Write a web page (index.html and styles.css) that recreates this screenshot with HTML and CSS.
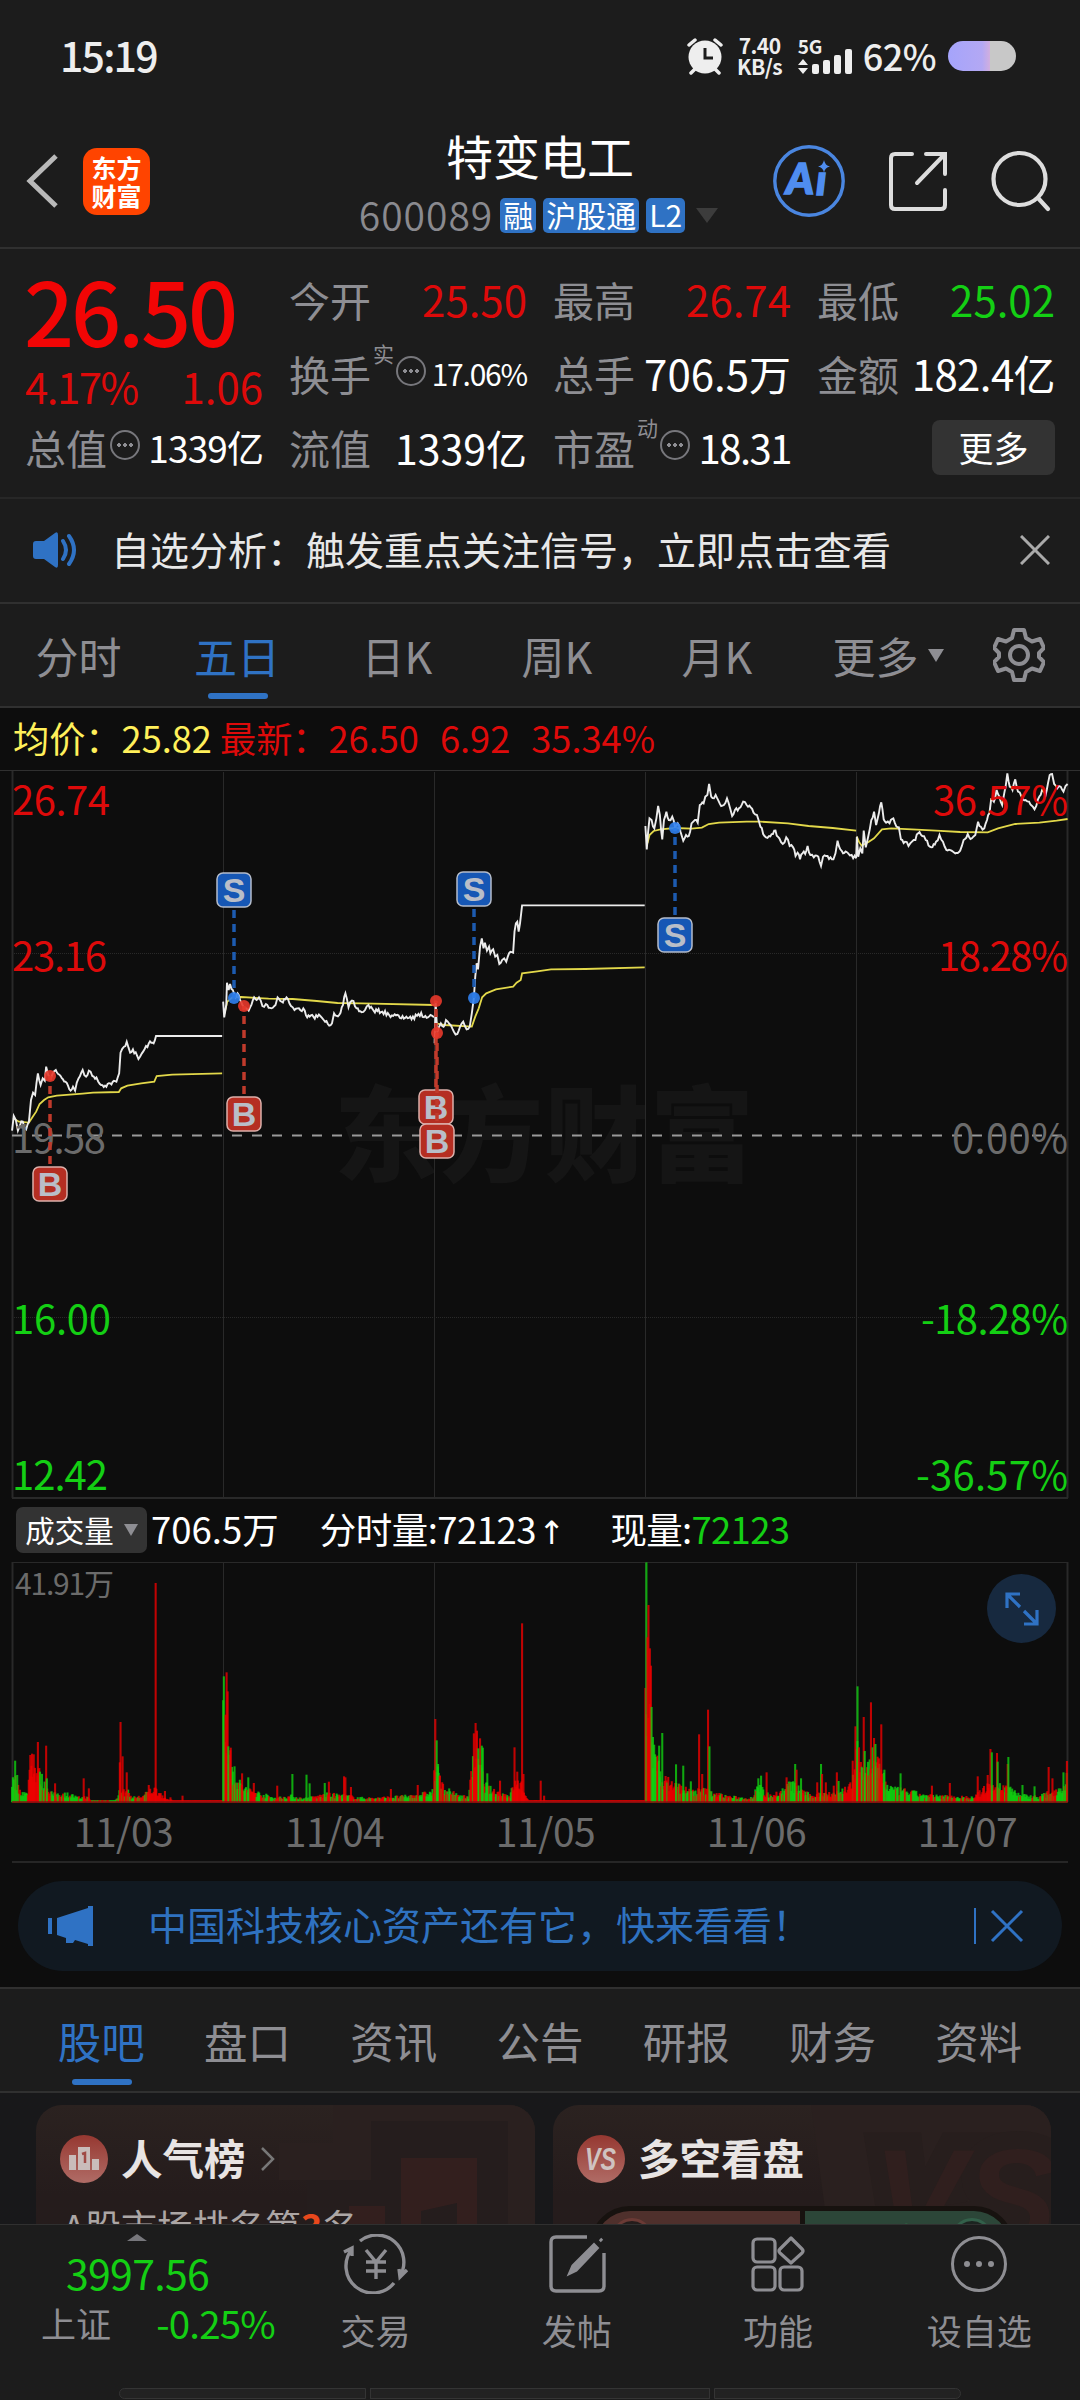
FILE: index.html
```html
<!DOCTYPE html>
<html lang="zh-CN">
<head>
    <meta charset="UTF-8">
    <meta name="viewport" content="width=device-width, initial-scale=1.0">
    <title>特变电工 600089</title>
    <link rel="stylesheet" href="styles.css">
</head>
<body>
    <div class="status">
        <span class="time">15:19</span>
        <div class="status-right">
            <svg class="alarm" width="38" height="38" viewBox="0 0 38 38">
                <circle cx="19" cy="20" r="16.500" fill="#eee"/>
                <path d="M3 8l6-5M35 8l-6-5M5 36l5-5M33 36l-5-5" stroke="#eee" stroke-width="3.500" stroke-linecap="round"/>
                <path d="M19 11v10h8" fill="none" stroke="#1c1c1c" stroke-width="3"/>
            </svg>
            <div class="speed"><span>7.40</span><span>KB/s</span></div>
            <div class="signal">
                <span>5G</span>
                <svg width="56" height="26" viewBox="0 0 56 26" fill="#eee">
                    <path d="M0 17l5-6 5 6zM0 20l5 6 5-6z"/>
                    <rect x="14" y="16" width="7" height="10" rx="2"/>
                    <rect x="25" y="12" width="7" height="14" rx="2"/>
                    <rect x="36" y="7" width="7" height="19" rx="2"/>
                    <rect x="47" y="1" width="7" height="25" rx="2"/>
                </svg>
            </div>
            <span class="percent">62%</span>
            <div class="battery"></div>
        </div>
    </div>

    <div class="header">
        <div class="header-left">
            <svg width="34" height="56" viewBox="0 0 34 56"><path d="M30 3L4 28l26 25" fill="none" stroke="#b9b9b9" stroke-width="5"/></svg>
            <div class="logo"><span>东方</span><span>财富</span></div>
        </div>
        <div class="header-title">
            <h1>特变电工</h1>
            <div class="sub">
                <span class="code">600089</span>
                <span class="tag">融</span>
                <span class="tag">沪股通</span>
                <span class="tag">L2</span>
                <i class="arrow"></i>
            </div>
        </div>
        <div class="header-right">
            <svg width="72" height="74" viewBox="0 0 72 74">
                <circle cx="36" cy="37" r="34.200" fill="none" stroke="#4a86e0" stroke-width="3.400"/>
                <text class="ai" x="13" y="50" textLength="28" lengthAdjust="spacingAndGlyphs">A</text>
                <text class="ai" x="43" y="51">ı</text>
                <path d="M51 16q1 5.500 6 6.500q-5 1-6 6q-1-5-6-6q5-1 6-6.500z" fill="#4f8df0"/>
            </svg>
            <svg class="share" width="58" height="60" viewBox="0 0 58 60" fill="none" stroke="#ddd" stroke-width="4" stroke-linecap="round">
                <path d="M23 3H6Q2 3 2 7v47q0 4 4 4h46q4 0 4-4V39M37 3h19v20M55 4L28 32"/>
            </svg>
            <svg width="60" height="62" viewBox="0 0 60 62" fill="none" stroke="#ddd" stroke-width="4.200" stroke-linecap="round">
                <circle cx="28.500" cy="29" r="26"/><path d="M47 48l10 11"/>
            </svg>
        </div>
    </div>

    <div class="quote">
        <div class="price-box">
            <div class="price">26.50</div>
            <div class="change"><span>4.17%</span><span class="diff">1.06</span></div>
        </div>
        <div class="item"><label>今开</label><b class="red">25.50</b></div>
        <div class="item"><label>最高</label><b class="red">26.74</b></div>
        <div class="item"><label>最低</label><b class="green">25.02</b></div>
        <div class="item"><label>换手<sup>实</sup></label><i class="info"></i><b class="small">17.06%</b></div>
        <div class="item"><label>总手</label><b>706.5万</b></div>
        <div class="item"><label>金额</label><b class="amount">182.4亿</b></div>
        <div class="item"><label>总值</label><i class="info tight"></i><b class="mid">1339亿</b></div>
        <div class="item"><label>流值</label><b class="cap">1339亿</b></div>
        <div class="item"><label>市盈<sup>动</sup></label><i class="info"></i><b class="pe">18.31</b></div>
        <div class="item last"><button class="more">更多</button></div>
    </div>

    <div class="notice">
        <svg width="46" height="38" viewBox="0 0 46 38">
            <path d="M3 10h8L22 2q3-2 3 2v30q0 4-3 2L11 28H3q-3 0-3-3V13q0-3 3-3z" fill="#2f72c4"/>
            <path d="M30 10q6 9 0 18M36 5q10 14 0 28" fill="none" stroke="#2f72c4" stroke-width="4" stroke-linecap="round"/>
        </svg>
        <p>自选分析：触发重点关注信号，立即点击查看</p>
        <svg width="30" height="30" viewBox="0 0 30 30"><path d="M1 1l28 28M29 1L1 29" stroke="#aaa" stroke-width="3"/></svg>
    </div>

    <div class="periods">
        <span>分时</span>
        <span class="on">五日</span>
        <span>日K</span>
        <span>周K</span>
        <span>月K</span>
        <span>更多<i class="arrow"></i></span>
        <svg width="52" height="54" viewBox="0 0 52 54" fill="none" stroke="#8e8e93" stroke-width="4" stroke-linejoin="round">
            <path d="M21 2h10l2 8 6 3.500 8-2.500 4 9-5 5v4l5 5-4 9-8-2.500-6 3.500-2 8H21l-2-8-6-3.500-8 2.500-4-9 5-5v-4l-5-5 4-9 8 2.500 6-3.500z"/>
            <circle cx="26" cy="27" r="9"/>
        </svg>
    </div>

    <div class="chart-info">
        <span class="yellow">均价：25.82</span>
        <span class="red">最新：</span>
        <span class="red">26.50</span>
        <span class="red">6.92</span>
        <span class="red">35.34%</span>
    </div>

    <svg class="chart" width="1080" height="730" viewBox="0 769 1080 730">
        <text class="watermark" x="334" y="1174" textLength="420">东方财富</text>
        <g class="grid">
            <path d="M0 770.500H1080" stroke="#303030"/>
            <path d="M12.500 771V1498M1067.500 771V1498" stroke-width="2"/>
            <path d="M223.500 772V1498M434.500 772V1498M645.500 772V1498M856.500 772V1498"/>
            <path d="M12 953.500H1068M12 1317.500H1068" stroke-dasharray="1 1"/>
            <path d="M12 1498H1068" stroke-width="2"/>
        </g>
        <path d="M12 1135.500H1068" stroke="#999" stroke-width="2" stroke-dasharray="10 10"/>
        <!-- the series use three units to one pixel -->
        <svg x="0" y="760" width="1080" height="450" viewBox="0 0 3136 1350" preserveAspectRatio="none">
            <g id="lines"></g>
        </svg>
        <g class="axis">
            <g class="red">
                <text x="12" y="815" textLength="98">26.74</text>
                <text x="12" y="971" textLength="95">23.16</text>
                <text x="1068" y="815" textLength="135" text-anchor="end">36.57%</text>
                <text x="1068" y="971" textLength="130" text-anchor="end">18.28%</text>
            </g>
            <g class="flat">
                <text x="12" y="1153" textLength="94">19.58</text>
                <text x="1068" y="1153" textLength="116" text-anchor="end">0.00%</text>
            </g>
            <g class="green">
                <text x="12" y="1334" textLength="99">16.00</text>
                <text x="12" y="1490" textLength="96">12.42</text>
                <text x="1068" y="1334" textLength="147" text-anchor="end">-18.28%</text>
                <text x="1068" y="1490" textLength="152" text-anchor="end">-36.57%</text>
            </g>
        </g>
        <g id="marks"></g>
    </svg>

    <div class="volume-info">
        <button>成交量<i class="arrow"></i></button>
        <span class="v1">706.5万</span>
        <span class="v2">分时量:72123<em>↑</em></span>
        <span class="v3">现量:<b class="green">72123</b></span>
    </div>

    <div class="volume">
        <svg width="1080" height="242" viewBox="0 1561 1080 242">
            <g class="grid">
                <path d="M12 1562.500H1068M223.500 1562V1802M434.500 1562V1802M645.500 1562V1802M856.500 1562V1802"/>
                <path d="M12.500 1562V1802M1067.500 1562V1802" stroke-width="2"/>
            </g>
            <text class="vmax" x="15" y="1595" textLength="99">41.91万</text>
            <svg x="0" y="1550" width="1080" height="320" viewBox="0 0 3136 960" preserveAspectRatio="none">
                <g id="bars"></g>
                <path d="M35 756H3100" stroke="#8a1010" stroke-width="4"/>
            </svg>
        </svg>
        <div class="expand">
            <svg width="34" height="34" viewBox="0 0 34 34" fill="none" stroke="#2f72c4" stroke-width="3.200">
                <path d="M15 2H2v14M2 2l13 13M19 32h13V18M32 32L19 19"/>
            </svg>
        </div>
    </div>
    <div class="dates">
        <span>11/03</span><span>11/04</span><span>11/05</span><span>11/06</span><span>11/07</span>
    </div>

    <div class="banner-wrap">
        <div class="banner">
            <svg width="46" height="40" viewBox="0 0 46 40" fill="#2f72c4">
                <path d="M0 12h4v16H0zM9 12L40 2V0h5v40h-5v-2l-13-4-2 3h-7v-5l-9-3z"/>
            </svg>
            <p>中国科技核心资产还有它，快来看看！</p>
            <i class="split"></i>
            <svg width="34" height="34" viewBox="0 0 34 34"><path d="M2 2l30 30M32 2L2 32" stroke="#2f72c4" stroke-width="3"/></svg>
        </div>
    </div>

    <div class="tabs">
        <span class="on">股吧</span>
        <span>盘口</span>
        <span>资讯</span>
        <span>公告</span>
        <span>研报</span>
        <span>财务</span>
        <span>资料</span>
    </div>

    <div class="cards">
        <div class="card">
            <svg class="deco" width="260" height="119" viewBox="0 0 260 119">
                <path d="M4 38h54V0h202v119H32V75H4z" fill="#2a201f"/>
                <path d="M32 75h64V16h137v103H32z" fill="#251d1d"/>
                <path d="M126 53h76v66h-20V98l-36 8v13h-20zM74 101h36v18H74z" fill="#331f1e"/>
            </svg>
            <div class="card-head">
                <svg width="48" height="48" viewBox="0 0 48 48">
                    <circle cx="24" cy="24" r="24" fill="url(#badge)"/>
                    <path d="M9 20h7v15H9zM18 12h12v23H18zM32 24h7v11h-7z" fill="#c9bcba"/>
                    <path d="M22 19l3-1v10" fill="none" stroke="#a04a45" stroke-width="2.500"/>
                    <defs>
                        <linearGradient id="badge" x1="0" y1="0" x2="0" y2="1">
                            <stop offset="0" stop-color="#963831"/><stop offset="1" stop-color="#b06c66"/>
                        </linearGradient>
                    </defs>
                </svg>
                <h2>人气榜</h2>
                <svg width="15" height="24" viewBox="0 0 15 24"><path d="M2 1l11 11L2 23" fill="none" stroke="#777" stroke-width="2.500"/></svg>
            </div>
            <p>A股市场排名第<b>3</b>名</p>
        </div>
        <div class="card">
            <svg class="deco" width="260" height="119" viewBox="0 0 260 119">
                <path d="M20 0h240v119H36z" fill="#2a201f"/>
                <text x="82" y="140" class="deco-vs">VS</text>
            </svg>
            <div class="card-head">
                <svg width="48" height="48" viewBox="0 0 48 48">
                    <circle cx="24" cy="24" r="24" fill="url(#badge)"/>
                    <text x="8" y="35" class="vs" textLength="31" lengthAdjust="spacingAndGlyphs">VS</text>
                </svg>
                <h2>多空看盘</h2>
            </div>
            <div class="versus">
                <div class="up"><i></i><span>看涨</span></div>
                <div class="down"><span>看跌</span><i></i></div>
            </div>
        </div>
    </div>

    <div class="footer">
        <div class="index">
            <i class="arrow-up"></i>
            <div class="green points">3997.56</div>
            <div class="row"><span>上证</span><span class="green">-0.25%</span></div>
        </div>
        <div class="nav">
            <svg width="66" height="60" viewBox="0 0 66 60" fill="none" stroke="#8e8e93" stroke-width="3.400">
                <path d="M17 7A27 27 0 0 1 57 42M64 36l-7 7-1-8M51 49A27 27 0 0 1 9 15M1 18l8-4v8"/>
                <path d="M23 16l10 12 10-12M33 28v17M23 28h20M23 37h20"/>
            </svg>
            <span>交易</span>
        </div>
        <div class="nav">
            <svg width="58" height="60" viewBox="0 0 58 60" fill="none" stroke="#8e8e93" stroke-width="3.400">
                <path d="M39 3H8Q3 3 3 8v44q0 5 5 5h43q5 0 5-5V19"/>
                <path d="M46 11L25 32l-3 7 6-3 21-22zM52 5l2 2" fill="#8e8e93"/>
            </svg>
            <span>发帖</span>
        </div>
        <div class="nav">
            <svg width="56" height="60" viewBox="0 0 56 60" fill="none" stroke="#8e8e93" stroke-width="3.200">
                <rect x="3" y="5" width="22" height="23" rx="4"/>
                <path d="M41 4l11 11q2 2 0 4L41 29 30 19q-2-2 0-4z" stroke-linejoin="round"/>
                <rect x="3" y="33" width="22" height="23" rx="4"/>
                <rect x="30" y="33" width="22" height="23" rx="4"/>
            </svg>
            <span>功能</span>
        </div>
        <div class="nav">
            <svg width="58" height="60" viewBox="0 0 58 60" fill="none" stroke="#8e8e93" stroke-width="3">
                <circle cx="29" cy="30" r="26.500"/>
                <g fill="#8e8e93" stroke="none"><circle cx="17" cy="30" r="3"/><circle cx="29" cy="30" r="3"/><circle cx="41" cy="30" r="3"/></g>
            </svg>
            <span>设自选</span>
        </div>
    </div>
    <div class="gesture"><i></i><i></i><i></i></div>

    <script src="chart.js"></script>
</body>
</html>
```

FILE: styles.css
```css
* {
    margin: 0;
    padding: 0;
    box-sizing: border-box;
}

body {
    width: 1080px;
    height: 2400px;
    overflow: hidden;
    background-color: #0d0d0d;
    color: #fff;
    font-family: "Noto Sans CJK SC", "Noto Sans", sans-serif;
    line-height: 1;
    display: flex;
    flex-direction: column;
}

body > * {
    flex-shrink: 0;
}

svg {
    display: block;
}

i, em {
    font-style: normal;
}

b {
    font-weight: 400;
}

button {
    border: none;
    color: #fff;
    font-family: inherit;
    line-height: 1;
}

.red { color: #dd0a0a; fill: #dd0a0a; }
.green { color: #14cf14; fill: #14cf14; }
.yellow { color: #fff05a; }
.flat { fill: #6b6b6b; }

.arrow {
    display: inline-block;
    border: 8px solid transparent;
    border-top: 13px solid #8e8e93;
    border-bottom: none;
}

/* status bar */
.status {
    height: 112px;
    padding: 0 64px 0 60px;
    background-color: #1c1c1c;
    color: #eee;
    display: flex;
    justify-content: space-between;
    align-items: center;
}

.time {
    margin-top: -3px;
    font-size: 41px;
    font-weight: 500;
    letter-spacing: -1.8px;
}

.status-right {
    display: flex;
    align-items: center;
}

.speed {
    width: 46px;
    margin: 0 15px 0 13px;
    font-size: 21px;
    font-weight: 700;
    display: flex;
    flex-direction: column;
    align-items: center;
    letter-spacing: -.5px;
}

.signal {
    font-size: 19px;
    font-weight: 700;
}

.signal svg {
    margin-top: -9px;
}

.signal span {
    position: relative;
    top: -2px;
}

.percent {
    margin: -2px 12px 0 9px;
    font-size: 36px;
    font-weight: 500;
    letter-spacing: -.5px;
}

.battery {
    width: 68px;
    height: 30px;
    border-radius: 15px;
    background: linear-gradient(90deg, #a5a4fb, #b3a8f4 50%, #cfaee0 61%, #c8c8c8 62%);
}

/* header */
.header {
    height: 137px;
    background-color: #1c1c1c;
    border-bottom: 2px solid #303030;
    display: grid;
    grid-template-columns: 330px 1fr 330px;
}

.header-left {
    padding: 3px 0 0 26px;
    display: flex;
    align-items: center;
    gap: 23px;
}

.logo {
    width: 67px;
    height: 67px;
    border-radius: 14px;
    background-color: #ff4400;
    font-size: 25px;
    font-weight: 700;
    line-height: 28px;
    display: flex;
    flex-direction: column;
    justify-content: center;
    align-items: center;
}

.header-title {
    padding-top: 19px;
    display: flex;
    flex-direction: column;
    align-items: center;
    gap: 20px;
}

h1 {
    font-size: 47px;
    font-weight: 400;
}

.sub {
    height: 35px;
    margin-left: -3px;
    display: flex;
    align-items: center;
    gap: 7px;
}

.code {
    margin-top: -3px;
    color: #8a8a8f;
    font-size: 39px;
    font-weight: 350;
    letter-spacing: 1px;
}

.tag {
    height: 35px;
    padding: 0 3px;
    border-radius: 5px;
    background-color: #2f72c4;
    font-size: 30px;
    line-height: 33px;
}

.sub .arrow {
    margin-left: 4px;
    border-width: 15px 11px 0;
    border-top-color: #3c3c3c;
}

.header-right {
    padding: 2px 29px 0 0;
    display: flex;
    justify-content: flex-end;
    align-items: center;
    gap: 44px;
}

.ai {
    font-family: "Lato", sans-serif;
    font-size: 42px;
    font-weight: 900;
    font-style: italic;
    fill: #4f8df0;
    stroke: #4f8df0;
    stroke-width: 1.5;
}

/* quote */
.quote {
    height: 250px;
    padding: 13px 25px 0 25px;
    background-color: #1c1c1c;
    border-bottom: 2px solid #272727;
    display: grid;
    grid-template-columns: repeat(4, 238px);
    grid-template-rows: repeat(3, 74px);
    justify-content: space-between;
}

.price-box {
    grid-row: span 2;
    display: flex;
    flex-direction: column;
}

.price {
    margin: 3px 0 12px -1px;
    color: #f20505;
    font-size: 88px;
    font-weight: 500;
    letter-spacing: -3.2px;
}

.change {
    color: #dd0a0a;
    font-size: 42px;
    display: flex;
    justify-content: space-between;
    letter-spacing: -1.5px;
}

.diff {
    letter-spacing: 0;
}

.item {
    display: flex;
    align-items: center;
    white-space: nowrap;
}

.item label {
    color: #8e8e93;
    font-size: 41px;
    position: relative;
}

.item sup {
    position: absolute;
    left: 84px;
    top: -10px;
    font-size: 21px;
}

.item b {
    margin-left: auto;
    font-size: 42px;
}

.item .amount { letter-spacing: -.6px; }
.item .cap { font-size: 41px; }
.item .pe { font-size: 40px; letter-spacing: -1.5px; }
.item .mid { font-size: 37px; letter-spacing: -.9px; }
.item .small { font-size: 30px; letter-spacing: -1.2px; }

.info {
    width: 30px;
    height: 30px;
    margin: -4px 0 0 25px;
    border: 2px solid #77777c;
    border-radius: 50%;
    background: radial-gradient(circle, #8e8e93 1.6px, transparent 2px) center / 6px 26px;
    background-clip: content-box;
    padding: 0 4px;
}

.tight {
    margin-left: 3px;
}

.last {
    justify-content: flex-end;
}

.more {
    width: 123px;
    height: 55px;
    padding-bottom: 2px;
    border-radius: 8px;
    background-color: #333;
    font-size: 35px;
}

/* notice */
.notice {
    height: 105px;
    padding: 0 30px 1px 33px;
    background-color: #1c1c1c;
    border-bottom: 2px solid #303030;
    display: flex;
    align-items: center;
}

.notice p {
    margin: -3px auto 0 32px;
    color: #e8e8e8;
    font-size: 39px;
}

/* period tabs */
.periods {
    height: 104px;
    background-color: #1c1c1c;
    border-bottom: 2px solid #303030;
    color: #8e8e93;
    font-size: 43px;
    line-height: 102px;
    text-align: center;
    display: grid;
    grid-template-columns: 157px repeat(4, 160px) 182px 80px;
    align-items: center;
    justify-items: center;
}

.periods span {
    height: 102px;
}

.on {
    color: #2f72c4;
    position: relative;
}

.on::after {
    content: "";
    width: 60px;
    height: 6px;
    border-radius: 3px;
    background-color: #2f72c4;
    position: absolute;
    left: calc(50% - 29px);
    bottom: 7px;
}

.periods .arrow {
    margin: 0 0 14px 9px;
    vertical-align: middle;
}

.chart-info {
    height: 61px;
    padding: 0 0 2px 13px;
    font-size: 36.2px;
    display: flex;
    align-items: center;
}

.chart-info .yellow { margin-right: 8px; }
.chart-info .red { margin-right: 21px; }
.chart-info .yellow + .red { margin-right: 0; }

/* charts */
.grid {
    fill: none;
    stroke: #292929;
    stroke-width: 1;
}

.watermark {
    font-size: 104px;
    font-weight: 900;
    fill: #151515;
}

.axis text {
    font-size: 40px;
}

.price-line {
    fill: none;
    stroke: #ececec;
    stroke-width: 1.9;
    vector-effect: non-scaling-stroke;
}

.avg-line {
    fill: none;
    stroke: #e2d84a;
    stroke-width: 1.8;
    vector-effect: non-scaling-stroke;
}

.mark text {
    font-family: "Liberation Sans", sans-serif;
    font-size: 34px;
    font-weight: 700;
    text-anchor: middle;
    fill: #b9bec8;
}

.vmax {
    font-size: 30px;
    fill: #6b6b6b;
}

.volume-info {
    height: 62px;
    padding: 0 0 0 16px;
    font-size: 36.5px;
    display: flex;
    align-items: center;
}

.volume-info span {
    margin-top: -1px;
}

.volume-info button {
    width: 131px;
    height: 46px;
    padding-bottom: 1px;
    border-radius: 7px;
    background-color: #333;
    font-size: 29.5px;
    display: flex;
    align-items: center;
    justify-content: center;
    gap: 10px;
}

.volume-info .arrow {
    border-width: 12px 7px 0;
}

.volume-info .v1 { margin-left: 4px; }
.volume-info .v2 { margin-left: 41px; letter-spacing: -.5px; }
.v2 em { margin-left: 2px; font-family: "DejaVu Sans", sans-serif; font-size: 32px; }
.volume-info .v3 { margin-left: 46px; letter-spacing: -.7px; }

.volume {
    position: relative;
}

.expand {
    width: 69px;
    height: 69px;
    border-radius: 50%;
    background-color: #17293f;
    display: flex;
    align-items: center;
    justify-content: center;
    position: absolute;
    right: 24px;
    top: 13px;
}

.dates {
    height: 60px;
    margin: 0 12px;
    padding: 8px 0 0 6px;
    border-bottom: 2px solid #262626;
    color: #6b6b6b;
    font-size: 39px;
    letter-spacing: -.5px;
    display: grid;
    grid-template-columns: repeat(5, 211px);
    text-align: center;
}

/* banner */
.banner-wrap {
    height: 126px;
    padding: 18px 18px 0;
    border-bottom: 2px solid #303030;
}

.banner {
    height: 90px;
    padding: 0 38px 0 30px;
    border-radius: 45px;
    background-color: #111921;
    color: #2f72c0;
    display: flex;
    align-items: center;
}

.banner p {
    margin: -5px auto 0 54px;
    font-size: 39px;
}

.split {
    width: 2px;
    height: 36px;
    margin-right: 14px;
    background-color: #2f72c4;
}

/* content tabs */
.tabs {
    height: 104px;
    padding: 0 28px 0 28px;
    background-color: #1c1c1c;
    border-bottom: 2px solid #303030;
    color: #8e8e93;
    font-size: 43.5px;
    line-height: 103px;
    display: grid;
    grid-template-columns: repeat(7, 1fr);
    text-align: center;
}

/* cards */
.cards {
    height: 131px;
    padding: 12px 29px 0 36px;
    overflow: hidden;
    background-color: #18181a;
    display: grid;
    grid-template-columns: 499px 498px;
    justify-content: space-between;
}

.card {
    height: 220px;
    padding: 30px 24px;
    border-radius: 26px;
    overflow: hidden;
    background: linear-gradient(#2b2220, #251c1c 90px);
    position: relative;
}

.deco {
    position: absolute;
    right: 0;
    top: 0;
}

.deco-vs {
    font-family: "Liberation Sans", sans-serif;
    font-size: 138px;
    font-weight: 700;
    font-style: italic;
    fill: #301f1e;
    stroke: #271e1d;
    stroke-width: 36px;
    paint-order: stroke;
}

.card-head {
    display: flex;
    align-items: center;
    position: relative;
}

h2 {
    margin: -3px 14px 0 13px;
    color: #e8e4e3;
    font-size: 41.5px;
    font-weight: 700;
}

.card p {
    margin: 24px 0 0 3px;
    color: #aca6a5;
    font-size: 36px;
    position: relative;
}

.card p b {
    color: #e8481c;
    font-weight: 700;
}

.vs {
    font-family: "Liberation Sans", sans-serif;
    font-size: 31px;
    font-weight: 700;
    font-style: italic;
    fill: #cfc3c1;
}

.versus {
    width: 424px;
    height: 80px;
    margin: 23px 0 0 13px;
    border: 5px solid #17120f;
    border-radius: 40px;
    overflow: hidden;
    background-color: #17120f;
    font-size: 32px;
    display: flex;
    gap: 5px;
    position: relative;
}

.versus div {
    flex: 1;
    display: flex;
    justify-content: space-between;
    padding: 7px 16px;
}

.up { background-color: #4f302c; color: #b84a22; }
.down { background-color: #2c4638; color: #2f8a50; }

.versus span {
    margin-top: 3px;
}

.up span { margin-right: 32px; }
.down span { margin-left: 32px; }

.versus i {
    width: 42px;
    height: 42px;
    border-radius: 50%;
    background-color: #241c1b;
    border: 3px solid #6b3a35;
}

.versus .down i {
    background-color: #1c2420;
    border-color: #33604a;
}

/* footer */
.footer {
    height: 162px;
    background-color: #1c1c1c;
    border-top: 1px solid #303030;
    color: #8e8e93;
    font-size: 35px;
    display: grid;
    grid-template-columns: 275px repeat(4, 201.2px);
}

.index .arrow-up {
    display: block;
    width: 0;
    margin: 9px 0 0 127px;
    border: 10.5px solid transparent;
    border-bottom: 7px solid #77777c;
    border-top: none;
}

.points {
    margin: 11px 0 0 66px;
    font-size: 41px;
    letter-spacing: -.7px;
}

.row {
    margin: 12px 0 0 41px;
    display: flex;
    justify-content: space-between;
}

.row .green {
    margin-top: -2px;
    font-size: 38.5px;
    letter-spacing: -.8px;
}

.nav {
    padding-top: 9px;
    display: flex;
    flex-direction: column;
    align-items: center;
    gap: 18px;
}

.gesture {
    height: 14px;
    padding: 2px 119px;
    background-color: #1c1c1c;
    display: grid;
    grid-template-columns: 247px 340px 247px;
    gap: 4px;
}

.gesture i {
    height: 11px;
    border: 1px solid #343434;
    background-color: #222;
}

.gesture i:first-child { border-radius: 6px 0 0 6px; }
.gesture i:last-child { border-radius: 0 6px 6px 0; }
```

FILE: chart.js
```js
const NS = 'http://www.w3.org/2000/svg'

// small seeded generator, so the minute noise is the same on every load
let seed = 7
function rnd() {
    seed = (seed * 16807) % 2147483647
    return seed / 2147483647
}

function add(parent, tag, attrs, text) {
    const el = document.createElementNS(NS, tag)
    for (const k in attrs) el.setAttribute(k, attrs[k])
    if (text) el.textContent = text
    parent.appendChild(el)
    return el
}

// price of each day: [offset, 'x,y x,y ...']
const prices = [
    [0, '35,1112 40,1068 46,1080 52,1112 58,1096 66,1085 76,1108 84,1085 90,1020 96,998 102,1005 110,940 118,975 124,955 130,962 134,920 140,945 148,955 156,935 162,930 176,948 190,965 205,992 212,980 218,992 228,955 240,930 250,950 258,932 268,948 280,952 290,972 305,977 320,970 338,965 346,940 350,878 360,860 368,845 378,878 386,868 402,897 412,880 432,850 446,850 453,828 645,828'],
    [0, '648,725 651,772 657,735 659,668 664,690 668,672 676,690 684,712 690,700 697,720 704,735 710,745 722,752 730,735 738,712 745,720 752,712 762,738 772,732 788,745 800,735 806,712 818,725 832,712 845,738 855,750 868,745 885,752 892,772 910,770 930,768 940,780 952,792 964,790 970,760 985,765 996,735 1003,700 1012,742 1022,722 1035,745 1050,757 1060,750 1070,735 1085,752 1110,755 1130,765 1150,766 1165,775 1180,770 1195,778 1215,762 1235,768 1250,765 1260,772'],
    [0, '1262,850 1265,722 1267,770 1270,817 1280,790 1288,800 1295,780 1305,792 1318,815 1328,822 1336,800 1345,785 1355,808 1364,800 1370,760 1376,714 1380,650 1384,610 1388,628 1394,560 1399,535 1404,565 1408,548 1414,572 1420,560 1424,580 1432,568 1438,590 1444,585 1450,612 1458,600 1464,595 1470,605 1478,580 1490,578 1494,515 1498,490 1502,485 1506,515 1510,490 1516,436 1872,436'],
    [1568, '306,198 310,268 314,215 318,175 324,180 332,205 338,175 343,138 348,165 355,238 360,180 367,155 374,180 384,170 392,200 400,190 408,215 416,242 424,225 432,228 440,190 450,180 458,188 464,135 475,130 480,110 486,105 491,72 497,110 505,115 510,105 518,122 526,138 534,135 543,115 552,145 558,168 566,150 574,152 582,142 590,125 600,135 612,142 620,158 630,165 640,200 652,228 665,228 680,212 695,235 705,252 715,232 725,258 735,262 742,288 748,278 755,298 762,280 770,282 777,258 785,285 795,292 808,290 816,318 822,290 835,288 852,298 858,280 864,242 872,268 880,280 895,280 905,285 918,295'],
    [1568, '918,295 920,230 924,290 930,265 936,280 940,212 946,262 952,235 958,205 962,180 970,155 976,195 984,160 991,127 998,178 1005,188 1015,190 1026,175 1035,200 1042,202 1048,238 1060,245 1070,258 1080,245 1090,240 1098,220 1110,228 1120,240 1136,262 1150,245 1160,225 1170,245 1180,270 1195,272 1206,280 1220,272 1230,240 1242,222 1254,235 1264,225 1272,185 1280,200 1290,205 1298,180 1305,160 1310,118 1318,125 1326,90 1334,110 1342,135 1348,100 1357,40 1364,80 1372,90 1380,58 1388,95 1398,110 1410,120 1420,125 1436,148 1446,118 1458,90 1468,105 1475,70 1480,45 1487,42 1493,72 1502,85 1512,80 1520,95 1526,78 1532,72']
]

const averages = [
    [0, '38,1075 55,1085 84,1088 95,1070 105,1055 115,1032 128,1020 140,1012 165,1007 240,1001 270,998 345,996 352,985 370,977 410,970 448,965 455,948 500,944 645,940'],
    [0, '652,760 660,725 675,712 700,711 780,716 850,717 920,723 980,729 1050,730 1262,735'],
    [0, '1266,790 1290,795 1370,800 1380,770 1390,745 1400,712 1412,700 1440,688 1490,680 1500,668 1512,660 1516,640 1560,634 1600,628 1700,627 1872,622'],
    [1568, '312,250 318,225 330,213 350,208 392,204 440,206 470,203 490,192 520,188 600,185 640,185 720,190 780,198 850,204 918,212'],
    [1568, '920,230 926,245 934,257 955,245 970,235 993,208 1020,205 1080,208 1150,212 1220,216 1300,217 1330,205 1380,192 1450,188 1500,182 1532,177']
]

function parse([offset, str]) {
    return str.split(' ').map(p => {
        const [x, y] = p.split(',').map(Number)
        return [x + offset, y]
    })
}

// fill in the minutes between two known points
function detail(points) {
    const out = [points[0]]
    for (let i = 1; i < points.length; i++) {
        const [x0, y0] = points[i - 1]
        const [x1, y1] = points[i]
        const n = Math.floor((x1 - x0) / 3.5)
        if (y0 !== y1 || x1 - x0 < 40) {
            for (let j = 1; j < n; j++) {
                const t = j / n
                out.push([x0 + (x1 - x0) * t, y0 + (y1 - y0) * t + (rnd() - 0.5) * 13])
            }
        }
        out.push([x1, y1])
    }
    return out
}

const lines = document.getElementById('lines')
averages.forEach(d => add(lines, 'polyline', { class: 'avg-line', points: parse(d).join(' ') }))
prices.forEach(d => add(lines, 'polyline', { class: 'price-line', points: detail(parse(d)).join(' ') }))

// buy and sell marks: letter, x, y of the badge, y of the dot
const marks = [
    ['B', 50, 1184, 1076],
    ['S', 234, 890, 998],
    ['B', 244, 1114, 1006],
    ['B', 436, 1107, 1001],
    ['B', 437, 1141, 1033],
    ['S', 474, 889, 998],
    ['S', 675, 935, 828]
]

const markBox = document.getElementById('marks')
marks.forEach(([letter, x, y, dot]) => {
    const sell = letter === 'S'
    const g = add(markBox, 'g', { class: 'mark' })
    add(g, 'path', {
        d: `M${x} ${y < dot ? y + 20 : y - 20}V${dot}`,
        stroke: sell ? '#1d5bb0' : '#c03a2b', 'stroke-width': 3.5, 'stroke-dasharray': '8 6'
    })
    add(g, 'circle', { cx: x, cy: dot, r: 6, fill: sell ? '#2f7fee' : '#e8392b', opacity: 0.9 })
    add(g, 'rect', {
        x: x - 17, y: y - 17, width: 34, height: 34, rx: 6,
        fill: sell ? '#1657b5' : '#b52e22', stroke: sell ? '#b4bccb' : '#dcb0ab', 'stroke-width': 1.5
    })
    add(g, 'text', { x: x, y: y + 12 }, letter)
})

// volume: start x, usual level as [x, height, share of red], single peaks as [x, height, colour]
const volumes = [
    {
        start: 35,
        level: [[0, 70, .3], [10, 70, .2], [20, 40, .3], [45, 25, .5], [52, 120, .95], [75, 100, .9], [95, 55, .6], [120, 25, .5], [145, 28, .2], [170, 25, .2], [190, 15, .7], [215, 18, .7], [230, 6, .4], [300, 5, .5], [310, 32, .7], [335, 35, .6], [350, 15, .5], [380, 20, .8], [410, 45, 1], [425, 35, 1], [450, 8, 1], [480, 6, 1], [500, 4, 1], [613, 4, 1]],
        peaks: [[44, 125, 'g'], [50, 82, 'g'], [88, 142, 'r'], [93, 146, 'r'], [98, 144, 'r'], [110, 181, 'r'], [116, 92, 'g'], [134, 170, 'r'], [136, 72, 'g'], [160, 57, 'r'], [243, 72, 'r'], [258, 42, 'r'], [348, 120, 'r'], [350, 241, 'r'], [356, 138, 'r'], [368, 90, 'r'], [432, 52, 'r'], [452, 658, 'r'], [479, 34, 'r'], [495, 15, 'r'], [530, 20, 'r']]
    },
    {
        start: 648,
        level: [[0, 260, .8], [14, 170, .8], [25, 110, .4], [40, 70, .4], [60, 45, .6], [100, 30, .5], [150, 14, .6], [200, 20, .2], [230, 12, .4], [260, 16, .8], [300, 25, .4], [350, 22, .6], [400, 14, .7], [450, 14, .5], [540, 20, .4], [600, 30, .4], [613, 40, .4]],
        peaks: [[650, 378, 'g'], [655, 263, 'r'], [658, 390, 'r'], [661, 333, 'r'], [663, 168, 'g'], [670, 164, 'r'], [681, 108, 'g'], [703, 87, 'r'], [721, 75, 'g'], [737, 58, 'r'], [805, 50, 'r'], [849, 85, 'g'], [890, 83, 'g'], [899, 57, 'g'], [943, 58, 'g'], [955, 62, 'r'], [999, 78, 'r'], [1003, 75, 'r'], [1019, 46, 'r'], [1135, 40, 'r'], [1213, 52, 'r']]
    },
    {
        start: 1261,
        level: [[0, 90, .6], [8, 100, .2], [20, 55, .5], [50, 30, .4], [100, 15, .6], [106, 120, .8], [135, 110, .5], [145, 60, .3], [170, 35, .4], [220, 22, .5], [232, 60, .9], [255, 60, 1], [262, 20, 1], [275, 6, 1], [300, 6, 1], [320, 4, 1], [613, 4, 1]],
        peaks: [[1264, 250, 'r'], [1268, 186, 'g'], [1272, 115, 'g'], [1277, 80, 'r'], [1376, 207, 'r'], [1381, 238, 'r'], [1385, 215, 'r'], [1394, 192, 'r'], [1389, 162, 'g'], [1399, 170, 'g'], [1402, 164, 'g'], [1415, 87, 'g'], [1452, 65, 'r'], [1494, 165, 'r'], [1502, 92, 'r'], [1516, 537, 'r'], [1520, 85, 'r'], [1570, 65, 'r'], [1580, 20, 'r']]
    },
    {
        start: 1874,
        level: [[0, 330, .9], [12, 330, .9], [18, 190, .3], [30, 130, .3], [45, 90, .3], [55, 70, .8], [90, 55, .5], [130, 35, .6], [170, 38, .6], [200, 30, .5], [230, 20, .5], [280, 14, .7], [310, 15, .4], [325, 60, .3], [350, 25, .6], [390, 30, .5], [420, 60, .4], [460, 35, .6], [480, 20, .5], [520, 30, .7], [560, 30, .6], [600, 60, .7], [613, 110, .7]],
        peaks: [[1877, 720, 'g'], [1880, 495, 'r'], [1883, 592, 'r'], [1887, 462, 'r'], [1890, 410, 'r'], [1892, 286, 'g'], [1896, 196, 'g'], [1909, 140, 'r'], [1914, 170, 'g'], [1923, 208, 'g'], [1963, 114, 'g'], [1984, 110, 'g'], [2006, 63, 'g'], [2030, 204, 'r'], [2039, 85, 'r'], [2056, 278, 'r'], [2060, 168, 'g'], [2202, 72, 'g'], [2210, 80, 'g'], [2226, 90, 'r'], [2284, 75, 'r'], [2309, 115, 'g'], [2313, 98, 'r'], [2326, 72, 'g'], [2373, 60, 'r'], [2384, 115, 'g'], [2387, 85, 'r'], [2398, 60, 'r'], [2421, 50, 'r'], [2430, 90, 'r'], [2435, 64, 'g'], [2476, 125, 'r'], [2484, 228, 'r']]
    },
    {
        start: 2487,
        level: [[0, 160, .6], [20, 110, .5], [50, 120, .5], [70, 110, .6], [85, 60, .3], [110, 40, .4], [150, 35, .3], [200, 22, .5], [230, 20, .5], [300, 18, .5], [340, 15, .8], [380, 50, .8], [410, 50, .6], [440, 50, .4], [480, 22, .3], [530, 18, .5], [570, 35, .5], [600, 50, .6], [613, 80, .9]],
        peaks: [[2490, 348, 'g'], [2494, 165, 'r'], [2508, 256, 'r'], [2511, 154, 'g'], [2529, 300, 'r'], [2534, 165, 'g'], [2538, 193, 'r'], [2542, 175, 'g'], [2552, 132, 'r'], [2559, 234, 'r'], [2568, 98, 'g'], [2615, 87, 'g'], [2706, 50, 'r'], [2758, 58, 'r'], [2839, 78, 'r'], [2868, 82, 'r'], [2876, 160, 'r'], [2880, 150, 'g'], [2895, 148, 'r'], [2897, 122, 'g'], [2926, 115, 'r'], [2928, 136, 'g'], [2969, 52, 'g'], [3004, 48, 'g'], [3045, 106, 'r'], [3056, 72, 'r'], [3088, 90, 'g'], [3098, 124, 'r']]
    }
]

const BASE = 757
const bars = document.getElementById('bars')

function bar(x, h, red) {
    add(bars, 'rect', {
        x: x - 3, y: BASE - h, width: 6, height: h,
        fill: red ? '#ee0000' : '#10d010', 'fill-opacity': 0.8
    })
}

volumes.forEach(day => {
    let k = 0
    for (let i = 0; i < 240; i++) {
        const x = i * 613 / 240
        while (k < day.level.length - 2 && day.level[k + 1][0] < x) k++
        const [x0, h0, r0] = day.level[k]
        const [x1, h1] = day.level[k + 1]
        const h = h0 + (h1 - h0) * (x - x0) / (x1 - x0)
        bar(day.start + x, Math.max(6, h * (0.5 + rnd() * 0.7)), rnd() < r0)
    }
    day.peaks.forEach(([x, h, c]) => bar(x, h, c === 'r'))
})
```
